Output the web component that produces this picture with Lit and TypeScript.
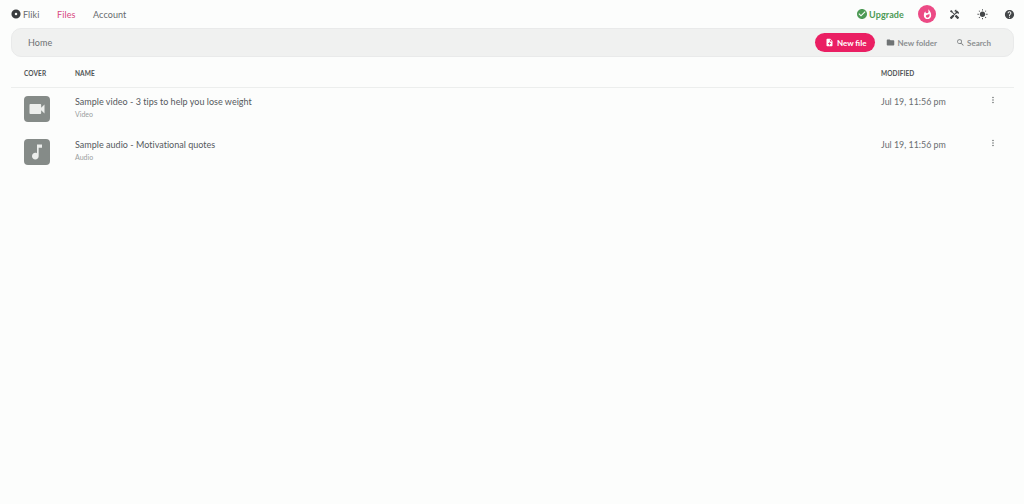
import { LitElement, html, css, svg } from "lit";
import { customElement } from "lit/decorators.js";

const icon = (d: string, size = 10, cls = "") =>
  html`<svg class=${cls} width=${size} height=${size} viewBox="0 0 24 24" fill="currentColor" fill-rule="evenodd">${svg`<path d=${d}></path>`}</svg>`;

const P = {
  file: "M14 2H6c-1.1 0-2 .9-2 2v16c0 1.1.9 2 2 2h12c1.1 0 2-.9 2-2V8l-6-6zm2 14h-3v3h-2v-3H8v-2h3v-3h2v3h3v2zm-3-7V3.5L18.5 9H13z",
  folder: "M10 4H4c-1.1 0-2 .9-2 2v12c0 1.1.9 2 2 2h16c1.1 0 2-.9 2-2V8c0-1.1-.9-2-2-2h-8l-2-2z",
  search: "M15.5 14h-.79l-.28-.27A6.47 6.47 0 0 0 16 9.5 6.5 6.5 0 1 0 9.5 16c1.61 0 3.09-.59 4.23-1.57l.27.28v.79l5 4.99L20.49 19l-4.99-5zm-6 0C7.01 14 5 11.99 5 9.5S7.01 5 9.5 5 14 7.01 14 9.5 11.99 14 9.5 14z",
  check: "M12 2C6.48 2 2 6.48 2 12s4.48 10 10 10 10-4.48 10-10S17.52 2 12 2zm-2 15-5-5 1.41-1.41L10 14.17l7.59-7.59L19 8l-9 9z",
  tools: "M21.67 18.17l-5.3-5.3h-.99l-2.54 2.54v.99l5.3 5.3c.39.39 1.02.39 1.41 0l2.12-2.12c.39-.38.39-1.02 0-1.41zM17.34 10.19l1.41-1.41 2.12 2.12c1.17-1.17 1.17-3.07 0-4.24l-3.54-3.54-1.41 1.41V1.71l-.7-.71-3.54 3.54.71.71h2.83l-1.41 1.41 1.06 1.06-2.89 2.89-4.13-4.13V5.06L4.83 2.04 2 4.87 5.03 7.9h1.41l4.13 4.13-.85.85H7.6l-5.3 5.3c-.39.39-.39 1.02 0 1.41l2.12 2.12c.39.39 1.02.39 1.41 0l5.3-5.3v-2.12l5.15-5.15 1.06 1.05z",
  sun: "M6.76 4.84 4.96 3.05 3.55 4.46l1.79 1.79 1.42-1.41zM4 10.5H1v2h3v-2zm9-9.95h-2V3.5h2V.55zm7.45 3.91-1.41-1.41-1.79 1.79 1.41 1.41 1.79-1.79zm-3.21 13.7 1.79 1.8 1.41-1.41-1.8-1.79-1.4 1.4zM20 10.5v2h3v-2h-3zm-8-5c-3.31 0-6 2.69-6 6s2.69 6 6 6 6-2.69 6-6-2.69-6-6-6zm-1 16.95h2V19.5h-2v2.95zm-7.45-3.91 1.41 1.41 1.79-1.8-1.41-1.41-1.79 1.8z",
  help: "M12 2C6.48 2 2 6.48 2 12s4.48 10 10 10 10-4.48 10-10S17.52 2 12 2zm1 17h-2v-2h2v2zm2.07-7.75-.9.92C13.45 12.9 13 13.5 13 15h-2v-.5c0-1.1.45-2.1 1.17-2.83l1.24-1.26c.37-.36.59-.86.59-1.41 0-1.1-.9-2-2-2s-2 .9-2 2H8c0-2.21 1.79-4 4-4s4 1.79 4 4c0 .88-.36 1.68-.93 2.25z",
  video: "M17 10.5V7c0-.55-.45-1-1-1H4c-.55 0-1 .45-1 1v10c0 .55.45 1 1 1h12c.55 0 1-.45 1-1v-3.5l4 4v-11l-4 4z",
  music: "M12 3v10.55c-.59-.34-1.27-.55-2-.55-2.21 0-4 1.79-4 4s1.79 4 4 4 4-1.79 4-4V7h4V3h-6z",
  more: "M12 8c1.1 0 2-.9 2-2s-.9-2-2-2-2 .9-2 2 .9 2 2 2zm0 2c-1.1 0-2 .9-2 2s.9 2 2 2 2-.9 2-2-.9-2-2-2zm0 6c-1.1 0-2 .9-2 2s.9 2 2 2 2-.9 2-2-.9-2-2-2z",
  flame: "M13.5.67s.74 2.65.74 4.8c0 2.06-1.35 3.73-3.41 3.73-2.07 0-3.63-1.67-3.63-3.73l.03-.36C5.21 7.51 4 10.62 4 14c0 4.42 3.58 8 8 8s8-3.58 8-8C20 8.61 17.41 3.8 13.5.67zM11.71 19c-1.78 0-3.22-1.4-3.22-3.14 0-1.62 1.05-2.76 2.81-3.12 1.77-.36 3.6-1.21 4.62-2.58.39 1.29.59 2.65.59 4.04 0 2.65-2.15 4.8-4.8 4.8z",
  logo: "M12 1a11 11 0 1 0 0 22 11 11 0 0 0 0-22zm0 8a3 3 0 1 1 0 6 3 3 0 0 1 0-6z",
};

const rows = [
  { icon: P.video, name: "Sample video - 3 tips to help you lose weight", type: "Video" },
  { icon: P.music, name: "Sample audio - Motivational quotes", type: "Audio" },
];

@customElement("app-root")
export class AppRoot extends LitElement {
  static styles = css`
    :host {
      display: block;
      width: 1024px;
      height: 504px;
      background: #fcfdfc;
      color: #55595c;
      font-family: "Lato", "Liberation Sans", sans-serif;
      overflow: hidden;
    }
    svg { display: block; flex: none; }
    .nav {
      height: 28px;
      display: flex;
      align-items: center;
      padding: 0 9px 0 11px;
    }
    .brand {
      display: flex; align-items: center; gap: 2px;
      font-size: 9px; letter-spacing: 0.1px; color: #666a6c; width: 46px;
    }
    .brand svg { color: #3a3d3f; }
    .link { font-size: 9px; letter-spacing: 0.1px; color: #666a6c; }
    .link.active { color: #d8487f; width: 36px; }
    .spacer { flex: 1; }
    .upgrade {
      display: flex; align-items: center; gap: 1px;
      color: #4d9a55; font-size: 9px; font-weight: 700; letter-spacing: 0.1px;
      margin-right: 14px;
    }
    .avatar {
      width: 18px; height: 18px; border-radius: 50%;
      background: #ec4a85; color: #fff;
      display: flex; align-items: center; justify-content: center;
      margin-right: 12.5px;
    }
    .tool { color: #444749; }
    .tool.t1 { margin-right: 17px; }
    .tool.t2 { margin-right: 16.5px; }
    .bar {
      margin: 0 10px 0 11px;
      height: 29px;
      background: #f0f1f0;
      border: 1px solid #e9eaea;
      box-sizing: border-box;
      border-radius: 10px;
      display: flex;
      align-items: center;
      padding: 0 22px 0 16px;
      font-size: 9px;
    }
    .home { color: #6c7072; letter-spacing: 0.1px; }
    .new {
      display: flex; align-items: center; gap: 3px;
      height: 19px; padding: 0 9px 0 10px;
      background: #ea1f63; color: #fff;
      border-radius: 10px;
      font-size: 8px; font-weight: 700;
      margin-right: 11px;
    }
    .act {
      display: flex; align-items: center; gap: 2px;
      font-size: 8px; font-weight: 700; color: #8b8f90;
    }
    .act svg { color: #6f7374; }
    .act.folder { margin-right: 19px; }
    .thead, .row {
      display: grid;
      grid-template-columns: 51px 806px 1fr;
      margin: 0 10px 0 11px;
      padding-left: 13px;
    }
    .thead {
      height: 31px;
      align-items: center;
      border-bottom: 1px solid #eceeed;
      box-sizing: border-box;
      font-size: 6.5px; font-weight: 700; color: #4f5355; letter-spacing: 0.1px;
      padding-top: 2px;
    }
    .row { height: 43px; position: relative; }
    .cover {
      width: 26px; height: 26px; margin-top: 8px;
      border-radius: 4px; background: #858b88; color: #eceeec;
      display: flex; align-items: center; justify-content: center;
    }
    .name {
      font-size: 9px; letter-spacing: 0.02px; color: #55595c;
      margin-top: 7px; line-height: 13px;
    }
    .type { font-size: 7px; color: #9a9d9e; margin-top: 2px; line-height: 9px; }
    .date { font-size: 8.9px; color: #6a6e70; margin-top: 7px; line-height: 13px; }
    .more { position: absolute; left: 976.5px; top: 7px; color: #6f7374; }
  `;

  render() {
    return html`
      <div class="nav">
        <div class="brand">${icon(P.logo, 10)}<span>Fliki</span></div>
        <span class="link active">Files</span>
        <span class="link">Account</span>
        <div class="spacer"></div>
        <div class="upgrade">${icon(P.check, 12)}<span>Upgrade</span></div>
        <div class="avatar">${icon(P.flame, 11)}</div>
        <div class="tool t1">${icon(P.tools, 11)}</div>
        <div class="tool t2">${icon(P.sun, 11)}</div>
        <div class="tool">${icon(P.help, 11)}</div>
      </div>
      <div class="bar">
        <span class="home">Home</span>
        <div class="spacer"></div>
        <div class="new">${icon(P.file, 9)}<span>New file</span></div>
        <div class="act folder">${icon(P.folder, 9)}<span>New folder</span></div>
        <div class="act">${icon(P.search, 9)}<span>Search</span></div>
      </div>
      <div class="thead"><span>COVER</span><span>NAME</span><span>MODIFIED</span></div>
      ${rows.map(
        (r) => html`<div class="row">
          <div class="cover">${icon(r.icon, 20)}</div>
          <div>
            <div class="name">${r.name}</div>
            <div class="type">${r.type}</div>
          </div>
          <div class="date">Jul 19, 11:56 pm</div>
          <div class="more">${icon(P.more, 10)}</div>
        </div>`
      )}
    `;
  }
}
